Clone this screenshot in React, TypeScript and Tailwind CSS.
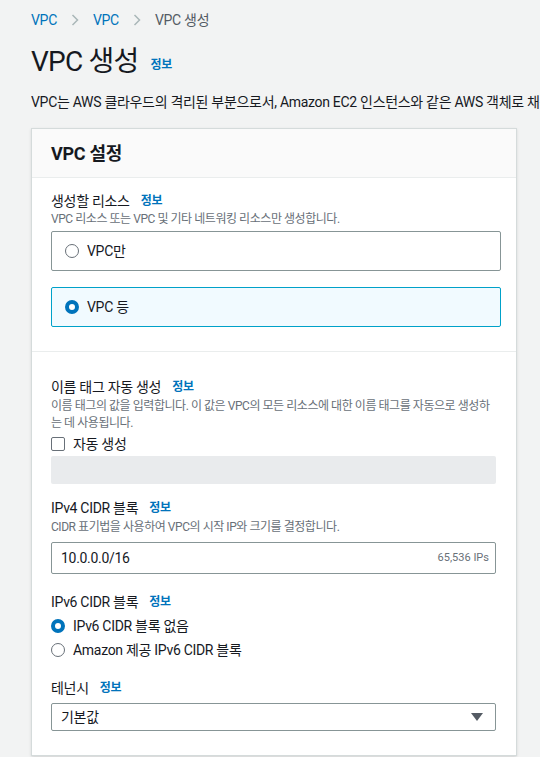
import React from "react";

const font = { fontFamily: '"Roboto", "Noto Sans CJK KR", "Noto Sans", sans-serif' };

function Info({ className = "" }: { className?: string }) {
  return <span className={`text-[12px] font-bold tracking-[-0.3px] text-[#0073bb] ${className}`}>정보</span>;
}

function Radio({ checked }: { checked?: boolean }) {
  return checked ? (
    <span className="inline-block h-[14px] w-[14px] shrink-0 rounded-full border-[4px] border-[#0073bb] bg-white box-border" />
  ) : (
    <span className="inline-block h-[14px] w-[14px] shrink-0 rounded-full border border-[#687078] bg-white box-border" />
  );
}

function Chevron() {
  return (
    <svg width="8" height="12" viewBox="0 0 8 12" className="mx-[14px]">
      <path d="M1.5 1 L6.5 6 L1.5 11" fill="none" stroke="#aab7b8" strokeWidth="1.5" />
    </svg>
  );
}

export default function App() {
  return (
    <div className="h-[757px] w-[540px] overflow-hidden bg-[#f2f3f3] text-[#16191f] tracking-[-0.3px]" style={font}>
      <div className="pl-[31px] pt-[10px]">
        <div className="flex h-[20px] items-center text-[14px] whitespace-nowrap">
          <span className="text-[#0073bb]">VPC</span>
          <Chevron />
          <span className="text-[#0073bb]">VPC</span>
          <Chevron />
          <span className="text-[#545b64]">VPC 생성</span>
        </div>
        <div className="mt-[14px] flex h-[36px] items-center whitespace-nowrap">
          <span className="text-[28px] leading-[36px] tracking-[-0.8px]">VPC 생성</span>
          <Info className="ml-[12px] mt-[6px]" />
        </div>
        <div className="mt-[12px] h-[20px] w-[540px] overflow-hidden whitespace-nowrap text-[14px] leading-[20px]">
          VPC는 AWS 클라우드의 격리된 부분으로서, Amazon EC2 인스턴스와 같은 AWS 객체로 채워질 수 있습니다.
        </div>
      </div>

      <div className="ml-[31px] mt-[16px] w-[486px] border border-[#d5dbdb] bg-white shadow-sm">
        <div className="flex h-[49px] items-center border-b border-[#eaeded] bg-[#fafafa] pl-[19px]">
          <span className="text-[18px] font-bold">VPC 설정</span>
        </div>

        <div className="pl-[19px] pt-[13px]">
          <div className="flex h-[20px] items-center text-[14px]">
            <span>생성할 리소스</span>
            <Info className="ml-[11px]" />
          </div>
          <div className="h-[16px] text-[12px] leading-[16px] tracking-[-0.45px] text-[#687078]">
            VPC 리소스 또는 VPC 및 기타 네트워킹 리소스만 생성합니다.
          </div>
          <div className="mt-[4px] flex h-[40px] w-[450px] items-center rounded-[2px] border border-[#879596] pl-[13px]">
            <Radio />
            <span className="ml-[8px] text-[14px]">VPC만</span>
          </div>
          <div className="mt-[16px] flex h-[40px] w-[450px] items-center rounded-[2px] border border-[#00a1c9] bg-[#f1faff] pl-[13px]">
            <Radio checked />
            <span className="ml-[8px] text-[14px]">VPC 등</span>
          </div>
        </div>

        <div className="mt-[24px] border-t border-[#eaeded]" />

        <div className="pl-[19px] pt-[25px] pb-[24px]">
          <div className="flex h-[20px] items-center text-[14px]">
            <span>이름 태그 자동 생성</span>
            <Info className="ml-[11px]" />
          </div>
          <div className="mt-[1px] w-[460px] whitespace-nowrap text-[12px] leading-[17px] tracking-[-0.45px] text-[#687078]">
            이름 태그의 값을 입력합니다. 이 값은 VPC의 모든 리소스에 대한 이름 태그를 자동으로 생성하
            <br />는 데 사용됩니다.
          </div>
          <div className="mt-[2px] flex h-[20px] items-center">
            <span className="inline-block h-[14px] w-[14px] rounded-[2px] border border-[#687078] bg-white" />
            <span className="ml-[8px] text-[14px]">자동 생성</span>
          </div>
          <div className="mt-[2px] h-[28px] w-[445px] rounded-[2px] bg-[#e9ebed]" />

          <div className="mt-[14px] flex h-[20px] items-center text-[14px]">
            <span>IPv4 CIDR 블록</span>
            <Info className="ml-[11px]" />
          </div>
          <div className="mt-[1px] h-[16px] text-[12px] leading-[16px] tracking-[-0.45px] text-[#687078]">
            CIDR 표기법을 사용하여 VPC의 시작 IP와 크기를 결정합니다.
          </div>
          <div className="mt-[7px] flex h-[32px] w-[445px] items-center justify-between rounded-[2px] border border-[#879596] pl-[9px] pr-[6px]">
            <span className="text-[14px]">10.0.0.0/16</span>
            <span className="text-[11px] tracking-[0px] text-[#687078]">65,536 IPs</span>
          </div>

          <div className="mt-[18px] flex h-[20px] items-center text-[14px]">
            <span>IPv6 CIDR 블록</span>
            <Info className="ml-[11px]" />
          </div>
          <div className="mt-[2px] flex h-[24px] items-center">
            <Radio checked />
            <span className="ml-[8px] text-[14px]">IPv6 CIDR 블록 없음</span>
          </div>
          <div className="flex h-[24px] items-center">
            <Radio />
            <span className="ml-[8px] text-[14px]">Amazon 제공 IPv6 CIDR 블록</span>
          </div>

          <div className="mt-[16px] flex h-[20px] items-center text-[14px]">
            <span>테넌시</span>
            <Info className="ml-[11px]" />
          </div>
          <div className="mt-[5px] flex h-[28px] w-[445px] items-center justify-between rounded-[2px] border border-[#879596] pl-[9px] pr-[12px]">
            <span className="text-[14px]">기본값</span>
            <svg width="12" height="8" viewBox="0 0 12 8">
              <path d="M0 0 H12 L6 8 Z" fill="#545b64" />
            </svg>
          </div>
        </div>
      </div>
    </div>
  );
}
